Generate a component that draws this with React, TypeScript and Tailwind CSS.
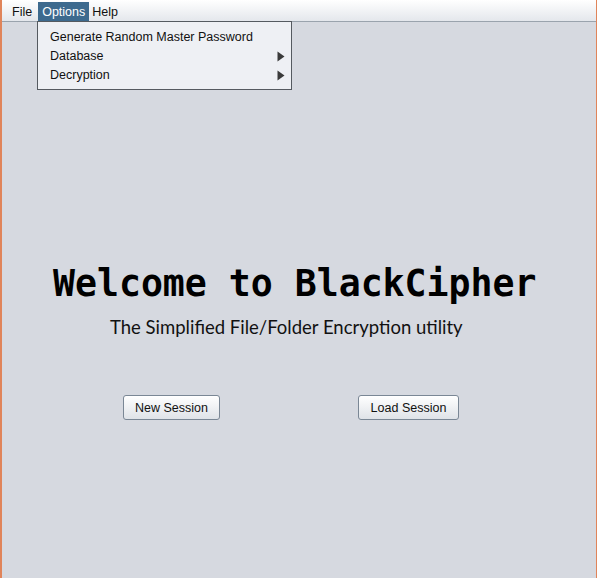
import { useState } from "react";

const ui = "font-['Liberation_Sans',Arial,sans-serif]";

function Arrow() {
  return (
    <svg width="8" height="11" viewBox="0 0 8 11" className="shrink-0">
      <path d="M0.5 0.5 L7.5 5.5 L0.5 10.5 Z" fill="#3a3a3a" />
    </svg>
  );
}

function SessionButton({ label, width }: { label: string; width: string }) {
  return (
    <button
      className={`h-[25px] ${width} rounded-[3px] border border-[#7a8795] bg-gradient-to-b from-[#ffffff] to-[#dfe3e8] pt-[1px] text-[12.5px] text-[#111] shadow-[inset_0_1px_0_#fff] ${ui}`}
    >
      {label}
    </button>
  );
}

export default function App() {
  const [open] = useState(true);

  return (
    <div className="relative flex h-[578px] w-[597px] flex-col border-l-2 border-r border-[#e0845a] bg-[#d6d9e0]">
      {/* menu bar */}
      <div
        className={`flex h-[22px] items-end border-b border-[#9aa3ad] bg-gradient-to-b from-[#ffffff] to-[#e4e7ec] text-[12.5px] text-[#111] ${ui}`}
      >
        <span className="flex h-[19px] items-center pl-[10px] pr-[6px] pt-[2px]">File</span>
        <span className="flex h-[19px] items-center bg-[#3d6a8e] px-[4px] pt-[2px] text-white">Options</span>
        <span className="flex h-[19px] items-center px-[3px] pt-[2px]">Help</span>
      </div>

      {open && (
        <div
          className={`absolute left-[35px] top-[21px] z-10 flex h-[69px] w-[255px] flex-col border border-[#555a60] bg-[#eef0f4] pt-[6px] text-[12.5px] text-[#111] ${ui}`}
        >
          <div className="flex h-[19px] items-center pl-[12px]">Generate Random Master Password</div>
          <div className="flex h-[19px] items-center justify-between pl-[12px] pr-[6px]">
            Database
            <Arrow />
          </div>
          <div className="flex h-[19px] items-center justify-between pl-[12px] pr-[6px]">
            Decryption
            <Arrow />
          </div>
        </div>
      )}

      {/* welcome panel */}
      <div className="flex flex-1 flex-col items-start">
        <h1 className="ml-[51px] mt-[241px] text-[36.5px] font-bold leading-[42px] text-black font-['DejaVu_Sans_Mono',monospace]">
          Welcome to BlackCipher
        </h1>
        <p className="ml-[108px] mt-[10px] text-[18.5px] leading-[24px] text-[#111] font-['Lato','Open_Sans',sans-serif]">
          The Simplified File/Folder Encryption utility
        </p>
        <div className="ml-[121px] mt-[56px] flex gap-[138px]">
          <SessionButton label="New Session" width="w-[97px]" />
          <SessionButton label="Load Session" width="w-[101px]" />
        </div>
      </div>
    </div>
  );
}
